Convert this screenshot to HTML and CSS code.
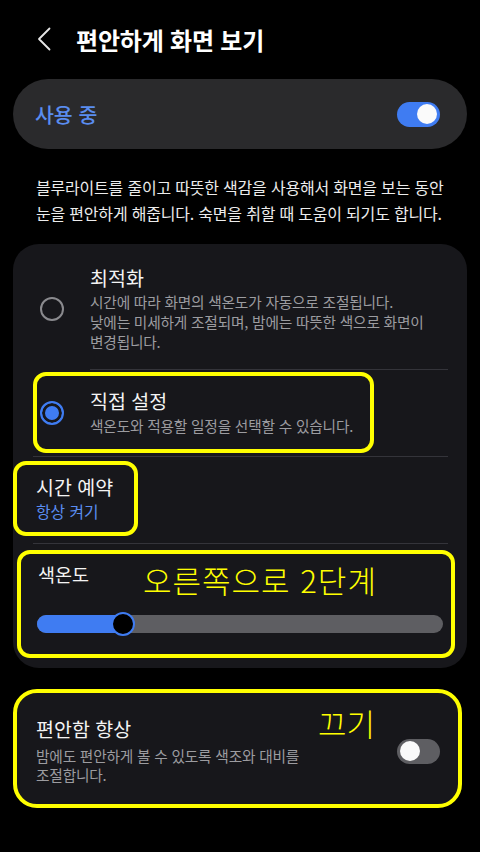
FILE: index.html
```html
<!DOCTYPE html>
<html lang="ko">
<head>
    <meta charset="utf-8">
    <title>편안하게 화면 보기</title>
    <link rel="stylesheet" href="styles.css">
</head>
<body>
    <div class="screen">
        <div class="header">
            <svg class="back" width="14" height="24" viewBox="0 0 14 24">
                <path d="M12.5 1.5 L2 12 L12.5 22.5" fill="none" stroke="#e6e6e6" stroke-width="1.8" stroke-linecap="round" stroke-linejoin="round"/>
            </svg>
            <h1>편안하게 화면 보기</h1>
        </div>

        <div class="master">
            <span class="master-label">사용 중</span>
            <span class="switch on"><span class="knob"></span></span>
        </div>

        <p class="intro">블루라이트를 줄이고 따뜻한 색감을 사용해서 화면을 보는 동안 눈을 편안하게 해줍니다. 숙면을 취할 때 도움이 되기도 합니다.</p>

        <div class="card">
            <div class="option">
                <span class="radio"></span>
                <div class="option-text">
                    <div class="title">최적화</div>
                    <div class="sub">시간에 따라 화면의 색온도가 자동으로 조절됩니다.<br>낮에는 미세하게 조절되며, 밤에는 따뜻한 색으로 화면이<br>변경됩니다.</div>
                </div>
            </div>
            <div class="divider indent"></div>

            <div class="option mark mark-custom">
                <span class="radio checked"></span>
                <div class="option-text">
                    <div class="title">직접 설정</div>
                    <div class="sub">색온도와 적용할 일정을 선택할 수 있습니다.</div>
                </div>
            </div>
            <div class="divider"></div>

            <div class="schedule mark">
                <div class="title">시간 예약</div>
                <div class="value">항상 켜기</div>
            </div>
            <div class="divider low"></div>

            <div class="temp mark">
                <div class="temp-head">
                    <span class="temp-label">색온도</span>
                    <span class="note">오른쪽으로 2단계</span>
                </div>
                <div class="slider">
                    <div class="slider-fill" style="width: 86px;"></div>
                    <span class="thumb"></span>
                </div>
            </div>
        </div>

        <div class="comfort mark">
            <div class="comfort-text">
                <div class="title">편안함 향상</div>
                <div class="sub">밤에도 편안하게 볼 수 있도록 색조와 대비를<br>조절합니다.</div>
            </div>
            <span class="switch"><span class="knob"></span></span>
            <span class="note note-off">끄기</span>
        </div>
    </div>
</body>
</html>
```

FILE: styles.css
```css
/* 편안하게 화면 보기 - dark settings page */
body {
    margin: 0;
    background: #000;
    color: #f2f2f2;
    font-family: "Noto Sans CJK KR", "Noto Sans", sans-serif;
}

.screen {
    width: 480px;
    height: 852px;
    overflow: hidden;
}

.header {
    height: 79px;
    display: flex;
    align-items: center;
    padding-left: 37px;
    box-sizing: border-box;
}

.header .back {
    margin-right: 25px;
    margin-top: -1px;
}

.header h1 {
    margin: 0;
    font-size: 24px;
    font-weight: 700;
    color: #fff;
    letter-spacing: -0.2px;
}

.master {
    margin: 0 13px;
    height: 70px;
    border-radius: 35px;
    background: #2a2a2c;
    display: flex;
    align-items: center;
    justify-content: space-between;
    padding: 0 27px 0 22px;
}

.master-label {
    font-size: 20.5px;
    color: #5a8df0;
    font-weight: 500;
}

.switch {
    width: 43px;
    height: 25px;
    border-radius: 13px;
    background: #5e5e62;
    display: flex;
    align-items: center;
    padding: 0 3px;
    box-sizing: border-box;
    flex-shrink: 0;
}

.switch .knob {
    width: 20px;
    height: 20px;
    border-radius: 50%;
    background: #fafafa;
}

.switch.on {
    background: #3f7cf2;
    justify-content: flex-end;
}

.intro {
    margin: 25px 30px 18px 36px;
    font-size: 16px;
    line-height: 26px;
    color: #ececec;
    letter-spacing: -0.2px;
}

.card {
    margin: 0 13px;
    background: #17171b;
    border-radius: 26px;
    padding: 0 0 10px;
}

.option {
    display: flex;
    align-items: center;
}

.option:first-child {
    padding: 22px 10px 17px 0;
}

.radio {
    width: 24px;
    height: 24px;
    box-sizing: border-box;
    border: 2px solid #8a8a8e;
    border-radius: 50%;
    margin: 0 26px 0 27px;
    flex-shrink: 0;
}

.radio.checked {
    border: 2.5px solid #3f7cf2;
    background: #3f7cf2;
    box-shadow: inset 0 0 0 3px #17171b;
}

.title {
    font-size: 19.5px;
    line-height: 24px;
    color: #f4f4f4;
}

.sub {
    margin-top: 2px;
    font-size: 14.7px;
    line-height: 20px;
    color: #9c9ca0;
    letter-spacing: -0.2px;
}

.mark {
    border: 4px solid #ffff00;
    border-radius: 13px;
    box-sizing: border-box;
}

.mark-custom {
    margin: 2px 0 0 20px;
    width: 341px;
    height: 81px;
}

.mark-custom .radio {
    margin: 0 26px 0 3px;
}

.mark-custom .sub {
    margin-top: 3px;
}

.divider {
    height: 1px;
    background: #34343a;
    margin: 3px 19px 0 20px;
}

.divider.indent {
    margin: 0 19px 0 77px;
}

.divider.low {
    margin-top: 7px;
}

.schedule {
    margin-top: 4px;
    width: 125px;
    height: 75px;
    padding: 10px 0 0 19px;
}

.schedule .value {
    margin-top: 3px;
    font-size: 15.8px;
    line-height: 20px;
    color: #5a8df0;
}

.temp {
    margin: 6px 12px 0 4px;
    height: 108px;
    padding: 4px 8px 0 16px;
}

.temp-head {
    display: flex;
    align-items: flex-start;
}

.temp-label {
    width: 105px;
    padding-left: 1px;
    margin-top: 5px;
    font-size: 18.5px;
    line-height: 22px;
    color: #f4f4f4;
}

.note {
    font-size: 31px;
    line-height: 36px;
    color: #ffff00;
    font-weight: 300;
    letter-spacing: 1px;
}

.temp-head .note {
    margin-top: 4px;
}

.slider {
    position: relative;
    margin-top: 17px;
    height: 18px;
    border-radius: 9px;
    background: #5e5e62;
}

.slider-fill {
    height: 100%;
    border-radius: 9px 0 0 9px;
    background: #3f7cf2;
}

.thumb {
    position: absolute;
    left: 74px;
    top: -3px;
    width: 24px;
    height: 24px;
    box-sizing: border-box;
    border-radius: 50%;
    background: #000;
    border: 2.5px solid #3f7cf2;
}

.comfort {
    position: relative;
    margin: 21px 0 0 13px;
    width: 449px;
    height: 119px;
    border-radius: 24px;
    background: #17171b;
    display: flex;
    align-items: center;
    padding: 0 18px 0 19px;
}

.comfort-text {
    flex: 1;
    margin-top: 3px;
}

.comfort .sub {
    margin-top: 5px;
    line-height: 19px;
}

.comfort .switch {
    margin-top: 5px;
}

.note-off {
    position: absolute;
    left: 301px;
    top: 12px;
    letter-spacing: 0;
}
```
